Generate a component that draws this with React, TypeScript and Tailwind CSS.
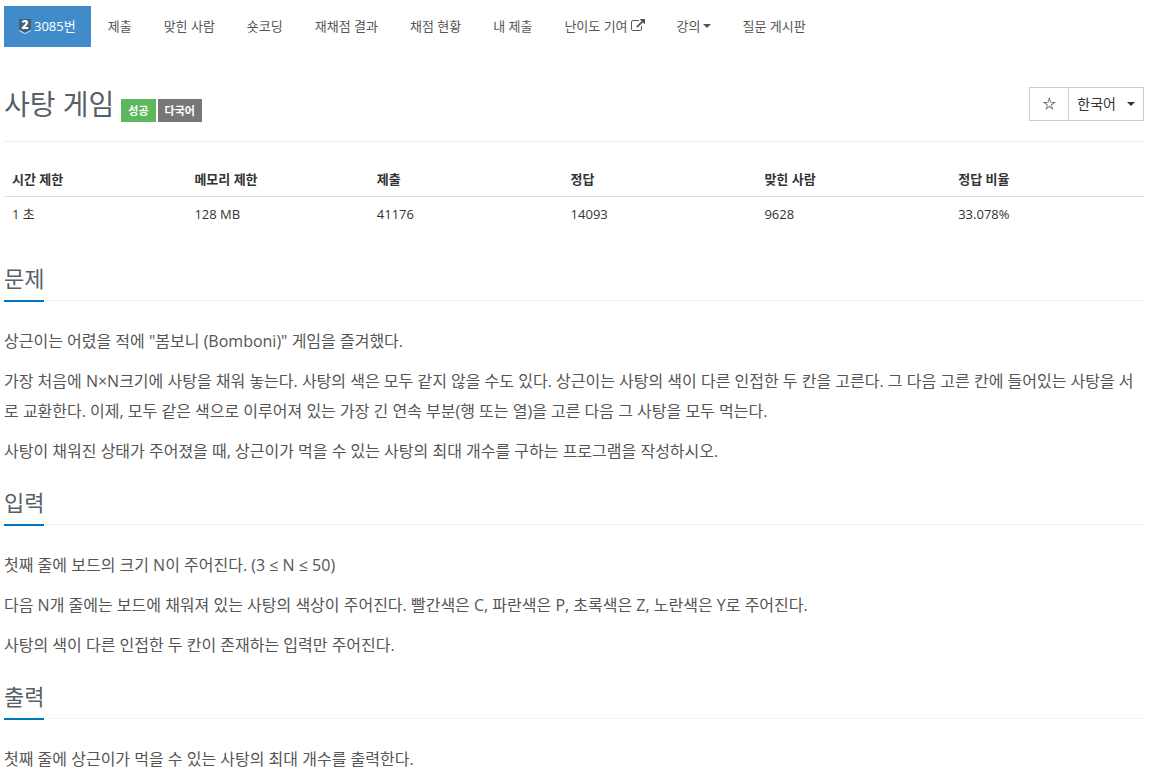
interface NavItem {
  label: string;
  icon?: "external" | "caret";
}

interface Stat {
  label: string;
  value: string;
  width: string;
}

interface Section {
  id: string;
  title: string;
  paragraphs: string[];
}

const navItems: NavItem[] = [
  { label: "제출" },
  { label: "맞힌 사람" },
  { label: "숏코딩" },
  { label: "재채점 결과" },
  { label: "채점 현황" },
  { label: "내 제출" },
  { label: "난이도 기여", icon: "external" },
  { label: "강의", icon: "caret" },
  { label: "질문 게시판" },
];

const stats: Stat[] = [
  { label: "시간 제한", value: "1 초", width: "w-[16%]" },
  { label: "메모리 제한", value: "128 MB", width: "w-[16%]" },
  { label: "제출", value: "41176", width: "w-[17%]" },
  { label: "정답", value: "14093", width: "w-[17%]" },
  { label: "맞힌 사람", value: "9628", width: "w-[17%]" },
  { label: "정답 비율", value: "33.078%", width: "w-[17%]" },
];

const sections: Section[] = [
  {
    id: "description",
    title: "문제",
    paragraphs: [
      '상근이는 어렸을 적에 "봄보니 (Bomboni)" 게임을 즐겨했다.',
      "가장 처음에 N×N크기에 사탕을 채워 놓는다. 사탕의 색은 모두 같지 않을 수도 있다. 상근이는 사탕의 색이 다른 인접한 두 칸을 고른다. 그 다음 고른 칸에 들어있는 사탕을 서로 교환한다. 이제, 모두 같은 색으로 이루어져 있는 가장 긴 연속 부분(행 또는 열)을 고른 다음 그 사탕을 모두 먹는다.",
      "사탕이 채워진 상태가 주어졌을 때, 상근이가 먹을 수 있는 사탕의 최대 개수를 구하는 프로그램을 작성하시오.",
    ],
  },
  {
    id: "input",
    title: "입력",
    paragraphs: [
      "첫째 줄에 보드의 크기 N이 주어진다. (3 ≤ N ≤ 50)",
      "다음 N개 줄에는 보드에 채워져 있는 사탕의 색상이 주어진다. 빨간색은 C, 파란색은 P, 초록색은 Z, 노란색은 Y로 주어진다.",
      "사탕의 색이 다른 인접한 두 칸이 존재하는 입력만 주어진다.",
    ],
  },
  {
    id: "output",
    title: "출력",
    paragraphs: ["첫째 줄에 상근이가 먹을 수 있는 사탕의 최대 개수를 출력한다."],
  },
];

function TierIcon() {
  return (
    <svg viewBox="0 0 12 16" className="h-4 w-3 overflow-visible" aria-hidden="true">
      <path d="M0 1h12v11l-6 3-6-3z" fill="#435f7a" />
      <path d="M0 12l6 3 6-3v1l-6 3-6-3z" fill="#d5e3ef" />
      <text x="6" y="11" textAnchor="middle" fontSize="12" fontWeight="800" fill="#fff">
        2
      </text>
    </svg>
  );
}

function ExternalIcon() {
  return (
    <svg viewBox="0 0 1792 1792" className="ml-[3px] size-3.5" fill="currentColor" aria-hidden="true">
      <path d="M1408 928v320q0 119-84.500 203.500T1120 1536H288q-119 0-203.500-84.500T0 1248V416q0-119 84.500-203.500T288 128h704q14 0 23 9t9 23v64q0 14-9 23t-23 9H288q-66 0-113 47t-47 113v832q0 66 47 113t113 47h832q66 0 113-47t47-113V928q0-14 9-23t23-9h64q14 0 23 9t9 23zm384-864v512q0 26-19 45t-45 19-45-19l-176-176-652 652q-10 10-23 10t-23-10L695 983q-10-10-10-23t10-23l652-652-176-176q-19-19-19-45t19-45 45-19h512q26 0 45 19t19 45z" />
    </svg>
  );
}

function Caret() {
  return (
    <svg viewBox="0 0 8 4" className="h-1 w-2" fill="currentColor" aria-hidden="true">
      <path d="M0 0h8L4 4z" />
    </svg>
  );
}

export default function App() {
  return (
    <div className="pt-1.5 pr-2 pb-1 pl-1 font-['Open_Sans','Noto_Sans_CJK_KR',sans-serif] text-[13px] leading-5 text-[#333]">
      <nav>
        <ul className="flex flex-wrap gap-0.5 text-[#555]">
          <li>
            <a href="#description" className="flex items-center gap-[3px] bg-[#428bca] px-[15px] pt-2.5 pb-[11px] text-white">
              <TierIcon />
              3085번
            </a>
          </li>
          {navItems.map((item) => (
            <li key={item.label}>
              <a href="#description" className="flex items-center px-[15px] pt-2.5 pb-[11px]">
                {item.label}
                {item.icon === "external" && <ExternalIcon />}
                {item.icon === "caret" && (
                  <span className="ml-0.5 flex">
                    <Caret />
                  </span>
                )}
              </a>
            </li>
          ))}
        </ul>
      </nav>

      <header className="flex items-start justify-between border-b border-[#eee] pt-10 pb-[19px]">
        <div className="flex items-end">
          <h1 className="pb-px text-[28px] leading-[34px] text-[#585f69]">사탕 게임</h1>
          <span className="ml-[7px] bg-[#5cb85c] px-[7px] text-[11px] leading-[23px] font-bold text-white">성공</span>
          <span className="ml-0.5 bg-[#777] px-[7px] text-[11px] leading-[23px] font-bold text-white">다국어</span>
        </div>
        <div className="flex h-[34px] border border-[#ccc] text-sm">
          <button type="button" aria-label="즐겨찾기" className="w-[39px] border-r border-[#ccc] pb-0.5 text-[13px] font-bold">
            ☆
          </button>
          <button type="button" className="flex items-center gap-[11px] px-2">
            한국어
            <Caret />
          </button>
        </div>
      </header>

      <table className="mt-[19px] w-full table-fixed text-left">
        <thead>
          <tr className="border-b border-[#ddd]">
            {stats.map((stat) => (
              <th key={stat.label} className={`${stat.width} px-2 pt-2 pb-[7px] font-bold`}>
                {stat.label}
              </th>
            ))}
          </tr>
        </thead>
        <tbody>
          <tr>
            {stats.map((stat) => (
              <td key={stat.label} className="px-2 pt-[7px] pb-2">
                {stat.value}
              </td>
            ))}
          </tr>
        </tbody>
      </table>

      <main className="mt-[30px]">
        {sections.map((section) => (
          <section key={section.id} id={section.id} className="mb-5">
            <div className="mb-[25px] flex border-b border-dotted border-[#e4e9f0]">
              <h2 className="-mb-0.5 border-b-2 border-[#0076c0] pb-[5px] text-[22px] leading-[33px] text-[#585f69]">
                {section.title}
              </h2>
            </div>
            {section.paragraphs.map((text) => (
              <p key={text} className="mb-2.5 text-base leading-[30px] break-all text-[#555]">
                {text}
              </p>
            ))}
          </section>
        ))}
      </main>
    </div>
  );
}
